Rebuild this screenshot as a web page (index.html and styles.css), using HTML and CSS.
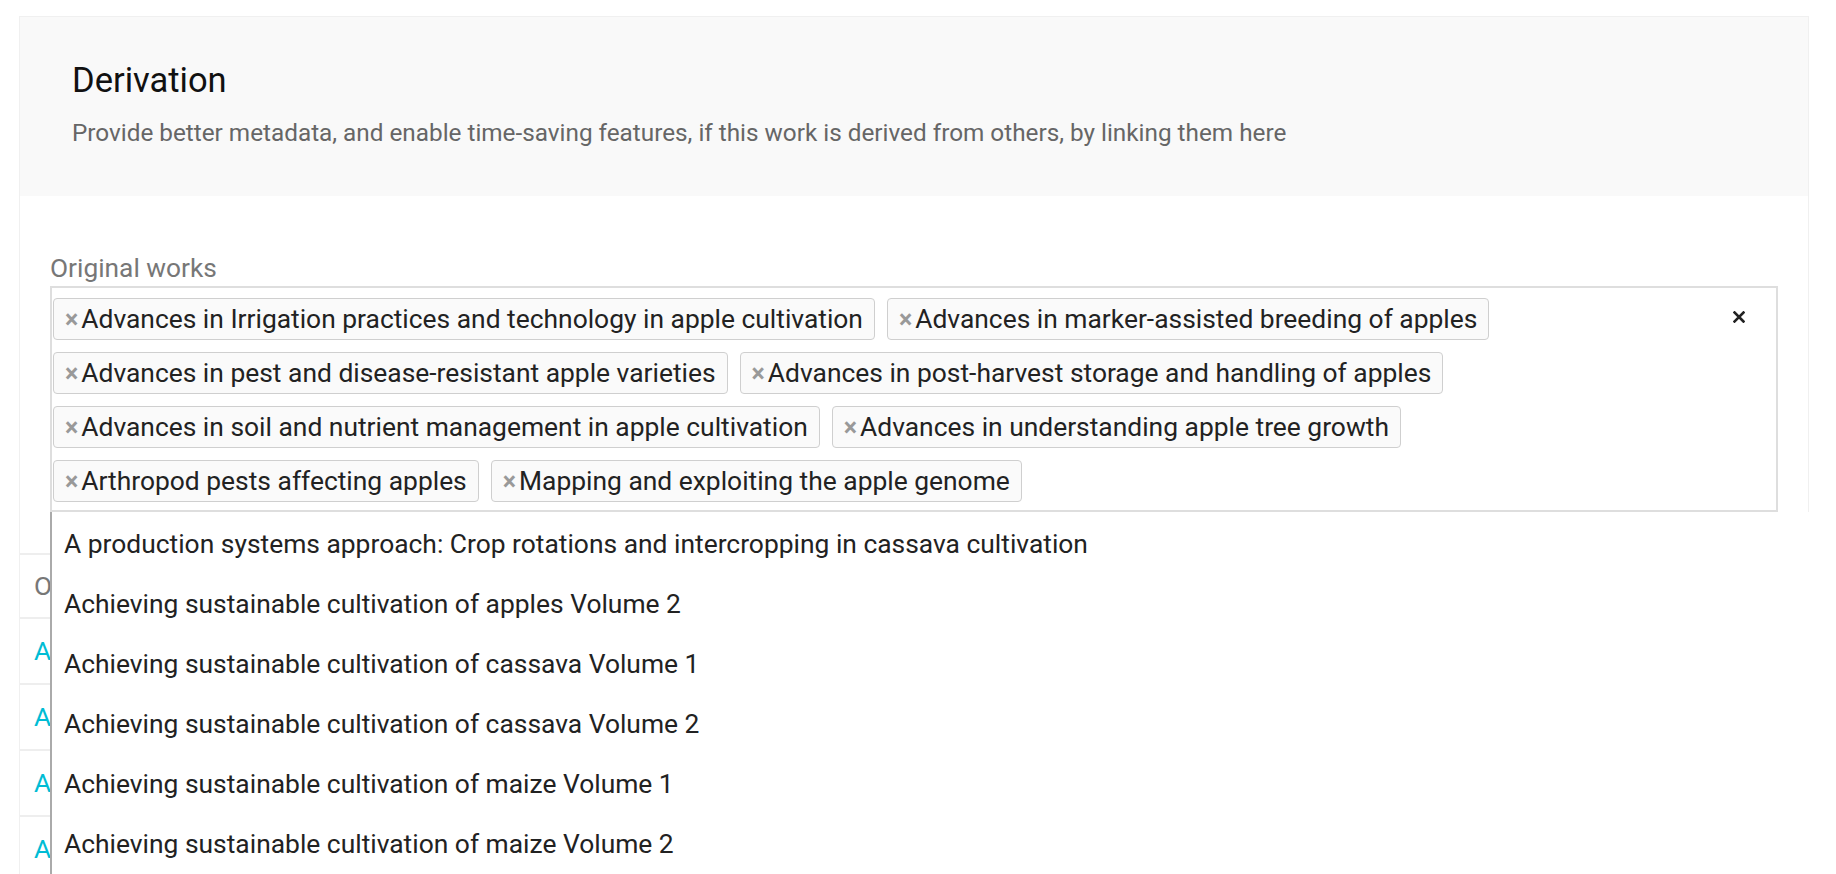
FILE: index.html
```html
<!DOCTYPE html>
<html lang="en">
<head>
  <meta charset="UTF-8">
  <title>Derivation</title>
  <link rel="stylesheet" href="styles.css">
</head>
<body>
  <div class="card">
    <div class="card-header">
      <h2 class="card-title">Derivation</h2>
      <p class="card-subtitle">Provide better metadata, and enable time-saving features, if this work is derived from others, by linking them here</p>
    </div>

    <div class="card-body">
      <label class="field-label">Original works</label>
      <div class="multi-select">
        <div class="tags">
          <span class="tag"><span class="tag-remove">×</span>Advances in Irrigation practices and technology in apple cultivation</span>
          <span class="tag"><span class="tag-remove">×</span>Advances in marker-assisted breeding of apples</span>
          <span class="tag"><span class="tag-remove">×</span>Advances in pest and disease-resistant apple varieties</span>
          <span class="tag"><span class="tag-remove">×</span>Advances in post-harvest storage and handling of apples</span>
          <span class="tag"><span class="tag-remove">×</span>Advances in soil and nutrient management in apple cultivation</span>
          <span class="tag"><span class="tag-remove">×</span>Advances in understanding apple tree growth</span>
          <span class="tag"><span class="tag-remove">×</span>Arthropod pests affecting apples</span>
          <span class="tag"><span class="tag-remove">×</span>Mapping and exploiting the apple genome</span>
        </div>
        <span class="clear-all">
          <svg width="12" height="12" viewBox="0 0 12 12"><path d="M1.5 1.5 L10.5 10.5 M10.5 1.5 L1.5 10.5" stroke="#222" stroke-width="2.6" stroke-linecap="square"/></svg>
        </span>

        <ul class="menu">
          <li>A production systems approach: Crop rotations and intercropping in cassava cultivation</li>
          <li>Achieving sustainable cultivation of apples Volume 2</li>
          <li>Achieving sustainable cultivation of cassava Volume 1</li>
          <li>Achieving sustainable cultivation of cassava Volume 2</li>
          <li>Achieving sustainable cultivation of maize Volume 1</li>
          <li>Achieving sustainable cultivation of maize Volume 2</li>
        </ul>
      </div>
    </div>

    <table class="works-table">
      <thead>
        <tr><th>Original work</th></tr>
      </thead>
      <tbody>
        <tr><td><a href="#">Advances in Irrigation practices and technology in apple cultivation</a></td></tr>
        <tr><td><a href="#">Advances in marker-assisted breeding of apples</a></td></tr>
        <tr><td><a href="#">Advances in pest and disease-resistant apple varieties</a></td></tr>
        <tr><td><a href="#">Advances in post-harvest storage and handling of apples</a></td></tr>
      </tbody>
    </table>
  </div>
</body>
</html>
```

FILE: styles.css
```css
html, body {
  margin: 0;
  overflow: hidden;
}

body {
  font-family: Roboto, "Liberation Sans", sans-serif;
  background: #fff;
  color: #222;
}

.card {
  margin: 16px 27px 0 19px;
  border: 1px solid #f0f0f0;
  background: #fff;
  min-height: 900px;
}

.card-header {
  background: #f9f9f9;
  padding: 43px 52px 49px 52px;
}

.card-title {
  margin: 0;
  font-size: 34.5px;
  font-weight: 400;
  line-height: 40px;
  color: #111;
}

.card-subtitle {
  margin: 19px 0 0;
  font-size: 24.3px;
  line-height: 28px;
  color: #666;
}

.card-body {
  padding: 57px 30px 0 30px;
}

.field-label {
  display: block;
  font-size: 26.3px;
  line-height: 30px;
  color: #777;
  margin-bottom: 3px;
}

.multi-select {
  position: relative;
  display: flex;
  align-items: flex-start;
  border: 2px solid #dedede;
  padding: 10px 0 8px 1px;
}

.tags {
  flex: 1;
  display: flex;
  flex-wrap: wrap;
  gap: 12px;
}

.tag {
  display: inline-flex;
  align-items: center;
  box-sizing: border-box;
  height: 42px;
  padding: 0 11px 0 11px;
  border: 1px solid #cfcfcf;
  border-radius: 4px;
  background: #fafafa;
  font-size: 26.4px;
  color: #222;
  white-space: nowrap;
}

.tag-remove {
  color: #999;
  font-weight: bold;
  font-size: 25px;
  margin-right: 3px;
}

.clear-all {
  display: flex;
  margin: 13px 31px 0 20px;
}

.menu {
  position: absolute;
  top: 100%;
  left: -2px;
  width: 1800px;
  margin: 2px 0 0;
  padding: 2px 0 0;
  list-style: none;
  background: #fff;
  border-left: 2px solid #aaa;
  z-index: 5;
}

.menu li {
  height: 60px;
  line-height: 60px;
  padding-left: 12px;
  font-size: 26.4px;
  color: #222;
  white-space: nowrap;
}

.works-table {
  width: 100%;
  margin-top: 41px;
  border-collapse: collapse;
}

.works-table th,
.works-table td {
  text-align: left;
  font-weight: 400;
  font-size: 26.3px;
  padding: 0 14px;
  border-top: 2px solid #eee;
}

.works-table th {
  height: 62px;
  color: #777;
}

.works-table td {
  height: 64px;
}

.works-table a {
  color: #00bcd4;
  text-decoration: none;
}
```
